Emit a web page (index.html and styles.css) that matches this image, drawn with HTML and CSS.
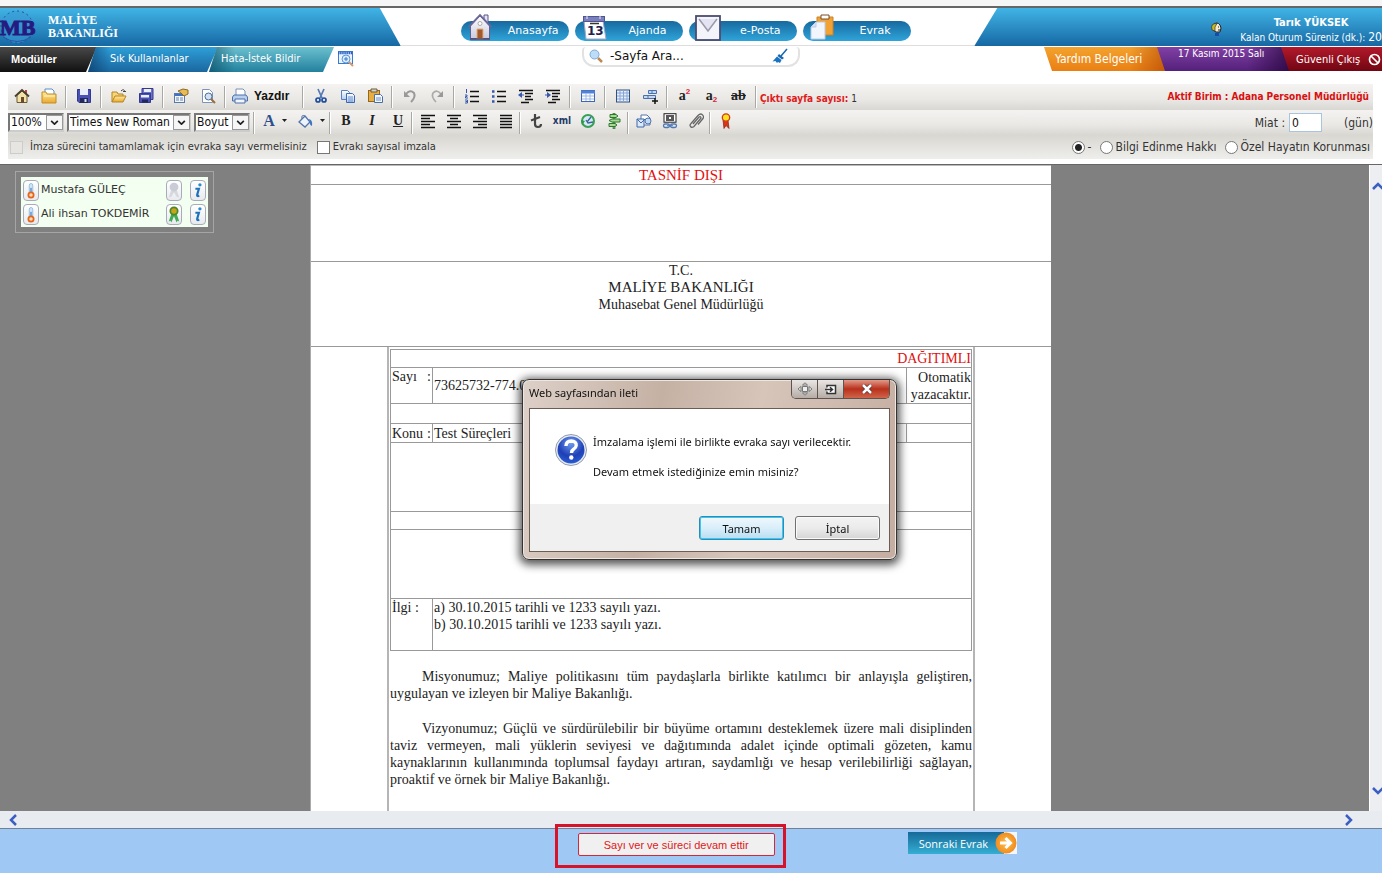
FILE: index.html
```html
<!DOCTYPE html>
<html lang="tr">
<head>
<meta charset="utf-8">
<title>Maliye Bakanlığı - Evrak</title>
<link rel="stylesheet" href="styles.css">
</head>
<body>
<svg class="defs" aria-hidden="true">
  <defs>
    <linearGradient id="roof" x2="0" y2="1"><stop offset="0" stop-color="#fff"/><stop offset="1" stop-color="#c9cbe0"/></linearGradient>
    <linearGradient id="sheetBlue" x2="0" y2="1"><stop offset="0" stop-color="#fff"/><stop offset="1" stop-color="#b4cdf2"/></linearGradient>
    <linearGradient id="folder" x2="0" y2="1"><stop offset="0" stop-color="#ffe9a0"/><stop offset="1" stop-color="#e9a92c"/></linearGradient>
    <radialGradient id="ball" cx=".5" cy=".25" r=".8"><stop offset="0" stop-color="#6f9cf0"/><stop offset=".6" stop-color="#1f3fb5"/><stop offset="1" stop-color="#2b62d8"/></radialGradient>
    <radialGradient id="orange"><stop offset="0" stop-color="#ffbf4d"/><stop offset="1" stop-color="#f08c1e"/></radialGradient>
  </defs>
  <symbol id="thermo" viewBox="0 0 16 20"><rect x="6" y="2" width="4" height="13" rx="2" fill="#cfe4f8" stroke="#93b7d8"/><rect x="7" y="7" width="2" height="7" fill="#6aa3dc"/><circle cx="8" cy="15" r="3" fill="#ffd9bd" stroke="#e2671c" stroke-width="2"/></symbol>
  <symbol id="info" viewBox="0 0 16 20"><circle cx="10.200" cy="3.500" r="1.900" fill="#2c8ad2"/><path d="M5 8h4L7 15q-.3 2 2.500 1" fill="none" stroke="#1d72bd" stroke-width="2.500"/></symbol>
  <symbol id="floppy" viewBox="0 0 16 16"><path d="M1.500 1.500h13v13H3l-1.500-1.500z" fill="#4a50b4" stroke="#33398c"/><rect x="4" y="1" width="8" height="6" fill="#e8eefc"/><rect x="4" y="10" width="8" height="5" fill="#22275e"/><rect x="8.500" y="11" width="2" height="3" fill="#dde3fa"/></symbol>
  <symbol id="caret" viewBox="0 0 5 3"><path d="M0 0h5L2.500 3z" fill="#222"/></symbol>
  <symbol id="chev" viewBox="0 0 10 6"><path d="M1 1l4 4 4-4" fill="none" stroke="#222" stroke-width="2"/></symbol>
</svg>

<div class="browser-edge"></div>
<header class="header">
  <div class="brand">
    <svg class="brand-logo" viewBox="0 0 40 36"><circle cx="17" cy="18" r="16" fill="#3a9bd6" fill-opacity=".6" stroke="#2b4fa0" stroke-dasharray="2 3"/><path d="M3 28q14 9 28 0" fill="none" stroke="#2c55a8"/><text x="0" y="26" class="brand-mono">MB</text></svg>
    <span class="brand-name">MALİYE<br>BAKANLIĞI</span>
  </div>
  <nav class="main-nav">
    <a class="pill" href="#"><svg class="pill-icon" viewBox="0 0 26 28"><path d="M17 2h4v9h-4z" fill="#e4e3f3" stroke="#56568c"/><path d="M3.500 13L13 3l9.500 10v12.500h-19z" fill="url(#roof)" stroke="#66608f"/><path d="M1.500 14L13 2l11.500 12" fill="none" stroke="#6a6798" stroke-width="1.800"/><circle cx="13" cy="10.500" r="2" fill="#fff" stroke="#aaa"/><path d="M10 16h6v10h-6z" fill="#a2592b" stroke="#e0b080"/><path d="M3 26h20" stroke="#564a70" stroke-width="1.500"/></svg><span>Anasayfa</span></a>
    <a class="pill" href="#"><svg class="pill-icon" viewBox="0 0 26 28"><path d="M3 8l2 18h20l-3-18z" fill="#fdfdff" stroke="#a5a5c4"/><rect x="2.500" y="3.500" width="21" height="5" fill="#7a7fbd" stroke="#50558f"/><path d="M6 2v4M19 2v4" stroke="#eef"/><path d="M9 10.500h9" stroke="#333" stroke-width="1.500"/><text x="6" y="22" class="day">13</text></svg><span>Ajanda</span></a>
    <a class="pill" href="#"><svg class="pill-icon" viewBox="0 0 26 28"><rect x="1" y="3" width="24" height="24" fill="#f4f4fb" stroke="#4c4c72" stroke-width="1.800"/><path d="M4 6l9 12 9-12" fill="#e3e3f2" stroke="#9a9aab" stroke-width="1.500"/></svg><span>e-Posta</span></a>
    <a class="pill" href="#"><svg class="pill-icon" viewBox="0 0 26 28"><path d="M8 4h16v18H8z" fill="#f1a233" stroke="#cf8124"/><path d="M12 2h8v4h-8z" fill="#fff" stroke="#754e2c"/><path d="M2 14l5-5h9v17H2z" fill="#f1f6fd" stroke="#b9cbe6"/><path d="M2 14h5V9" fill="#d5e2f4" stroke="#b9cbe6"/></svg><span>Evrak</span></a>
  </nav>
  <div class="account">
    <svg class="account-icon" viewBox="0 0 12 14"><path d="M3 3q4-4 7 0l1 3-1 4H6L3 8z" fill="#f6ecd0" stroke="#222"/><path d="M2 8Q0 1 7 1.500L5 5v4z" fill="#c9b91e" stroke="#333" stroke-width=".7"/><path d="M8 5h1M8 8h2" stroke="#222"/><path d="M5 11h4v3H5z" fill="#1848b0"/></svg>
    <div class="account-text"><strong>Tarık YÜKSEK</strong><span>Kalan Oturum Süreniz (dk.): <b class="minutes">20</b></span></div>
  </div>
</header>

<div class="tabs">
  <nav class="tabs-left">
    <a href="#" class="tab tab-black">Modüller</a>
    <a href="#" class="tab tab-blue">Sık Kullanılanlar</a>
    <a href="#" class="tab tab-teal">Hata-İstek Bildir</a>
    <button class="plain tab-zoom" aria-label="Büyüt"><svg width="17" height="17" viewBox="0 0 17 17"><rect x="1.500" y="1.500" width="14" height="12" fill="#eaf3ff" stroke="#3a7bd0"/><path d="M1 3h15" stroke="#2a63c8" stroke-width="2.500" stroke-dasharray="1.500 .6"/><circle cx="9" cy="9" r="4" fill="#d9ecff" stroke="#5d97d4"/><path d="M7 9h4M9 7v4" stroke="#3978c8"/><path d="M12 12l4 4" stroke="#d39a6b" stroke-width="2"/></svg></button>
  </nav>
  <form class="search">
    <svg width="14" height="14" viewBox="0 0 14 14"><circle cx="5.500" cy="5.500" r="4.500" fill="#bddcf8" stroke="#7fa9d2"/><path d="M9 9l4 4" stroke="#bd8a55" stroke-width="2.500"/></svg>
    <input type="text" aria-label="Sayfa ara" value="-Sayfa Ara...">
    <button type="button" class="plain" aria-label="Temizle"><svg width="17" height="16" viewBox="0 0 17 16"><path d="M16 1l-6 7" stroke="#1767b0" stroke-width="1.500"/><path d="M8 6l5 4-2 1.500L6.500 8z" fill="#1767b0"/><path d="M6 8.500l4.500 3.500-1.500 3-2-1-1 1-1.500-2-3 .5z" fill="#1b72c0"/></svg></button>
  </form>
  <div class="tabs-right">
    <a href="#" class="flag flag-orange">Yardım Belgeleri</a>
    <span class="flag flag-purple">17 Kasım 2015 Salı</span>
    <a href="#" class="flag flag-red">Güvenli Çıkış <svg width="13" height="13" viewBox="0 0 13 13"><circle cx="6.500" cy="6.500" r="5" fill="none" stroke="#fff" stroke-width="1.700"/><path d="M3 3l7 7" stroke="#fff" stroke-width="1.700"/></svg></a>
  </div>
</div>

<div class="toolbars">
  <div class="bar bar-main">
    <button class="tool" aria-label="Ana sayfa"><svg viewBox="0 0 16 16"><path d="M11 2h2v5h-2z" fill="#b44"/><path d="M3 7v7.500h10V7L8 3z" fill="#f4e3a6" stroke="#6b5836"/><path d="M1 8.500L8 2l7 6.500" fill="none" stroke="#4b4030" stroke-width="1.800"/><path d="M7 9h3v6H7z" fill="#6a4a2c"/></svg></button>
    <button class="tool" aria-label="Klasör"><svg viewBox="0 0 16 16"><path d="M4 1h7l2 2v6H4z" fill="#fff" stroke="#5a8fd0"/><path d="M1 4h4l1 2h9v9H1z" fill="url(#folder)" stroke="#c58c1e"/><path d="M3 8h11" stroke="#fff6cc"/></svg></button>
    <i class="sep"></i>
    <button class="tool" aria-label="Kaydet"><svg><use href="#floppy"/></svg></button>
    <i class="sep"></i>
    <button class="tool" aria-label="Aç"><svg viewBox="0 0 16 16"><path d="M1 14V4h5l1 2h5v3" fill="#f5d67a" stroke="#b58420"/><path d="M1 14l3-6h11l-3 6z" fill="url(#folder)" stroke="#b58420"/><path d="M10 3q3-3 4 1m-2-.5h3" fill="none" stroke="#444"/></svg></button>
    <button class="tool" aria-label="Farklı kaydet"><svg viewBox="0 0 16 16"><path d="M4 .5h11v11H4z" fill="#6d74c9" stroke="#33398c"/><path d="M6 1h7v3H6z" fill="#e8eefc"/><path d="M1.500 5.500h11v9h-11z" fill="#4a50b4" stroke="#33398c"/><path d="M3 7h8v2.500H3z" fill="#e8eefc"/><path d="M4 11.500h6v3H4z" fill="#22275e"/></svg></button>
    <i class="sep"></i>
    <button class="tool" aria-label="Özellikler"><svg viewBox="0 0 16 16"><rect x="1.500" y="5.500" width="10" height="9" fill="#f2f6fd" stroke="#5c7aa8"/><path d="M2 7h9" stroke="#3e72c4" stroke-width="2"/><path d="M3 10h3M7 10h3M3 12h3M7 12h3" stroke="#6b85ac"/><path d="M5 3l5-2 5 1v4l-4 2-3-3z" fill="#e7bc55" stroke="#8e6a21"/></svg></button>
    <button class="tool" aria-label="Önizleme"><svg viewBox="0 0 16 16"><path d="M2.500 1.500h7l3 3v10h-10z" fill="#fff" stroke="#7b93b8"/><circle cx="8.500" cy="8.500" r="3.500" fill="#cfe3f7" stroke="#4f6c92"/><path d="M11 11l4 4" stroke="#9b6b3a" stroke-width="2"/></svg></button>
    <i class="sep"></i>
    <button class="tool tool-print"><svg viewBox="0 0 16 16"><path d="M4 7V1h7l2 2v4" fill="#fff" stroke="#7b93b8"/><path d="M2 7h12l1.500 2v4h-15V9z" fill="#b8cff0" stroke="#4e71a8"/><path d="M3 11h10v4H3z" fill="#f1f6ff" stroke="#4e71a8"/></svg>Yazdır</button>
    <i class="sep"></i>
    <button class="tool" aria-label="Kes"><svg viewBox="0 0 16 16"><path d="M5 1l4 9M11 1L7 10" stroke="#5579b5" stroke-width="1.700"/><circle cx="5" cy="12" r="2" fill="none" stroke="#1d4c9e" stroke-width="1.700"/><circle cx="11" cy="12" r="2" fill="none" stroke="#1d4c9e" stroke-width="1.700"/></svg></button>
    <button class="tool" aria-label="Kopyala"><svg viewBox="0 0 16 16"><path d="M1.500 2.500h6l2 2v7h-8z" fill="url(#sheetBlue)" stroke="#5a80bd"/><path d="M6.500 5.500h6l2 2v7h-8z" fill="url(#sheetBlue)" stroke="#3d68b0"/><path d="M8 9h5M8 11h5M8 13h5" stroke="#6b92d0"/></svg></button>
    <button class="tool" aria-label="Yapıştır"><svg viewBox="0 0 16 16"><rect x="1.500" y="2.500" width="11" height="11" fill="#e6ae43" stroke="#96661a"/><path d="M4 1h6v3H4z" fill="#d9d4c8" stroke="#6b5a3c"/><path d="M7.500 6.500h6l2 2v6h-8z" fill="#f3f7ff" stroke="#4f6ea0"/><path d="M9 10h5M9 12h5" stroke="#6b92d0"/></svg></button>
    <i class="sep"></i>
    <button class="tool" aria-label="Geri al"><svg viewBox="0 0 16 16"><path d="M4 6q4-5 8-1 2 4-3 9" fill="none" stroke="#999" stroke-width="2"/><path d="M2 3v6h6z" fill="#999"/></svg></button>
    <button class="tool" aria-label="Yinele"><svg viewBox="0 0 16 16"><path d="M12 6Q8 1 4 5q-2 4 3 9" fill="none" stroke="#aaa" stroke-width="1.700"/><path d="M14 3v6H8z" fill="#999"/></svg></button>
    <i class="sep"></i>
    <button class="tool" aria-label="Numaralı liste"><svg viewBox="0 0 16 16"><path d="M6 3.500h9M6 8.500h9M6 13.500h9" stroke="#111" stroke-width="1.500"/><path d="M2.500 1v4M1 7h2v1.500H1.500V10H4M1 12h2.500v3H1M1.500 13.500h2" fill="none" stroke="#3558ac"/></svg></button>
    <button class="tool" aria-label="Madde işaretli liste"><svg viewBox="0 0 16 16"><path d="M6 3.500h9M6 8.500h9M6 13.500h9" stroke="#111" stroke-width="1.500"/><path d="M1 3.500h2.500M1 8.500h2.500M1 13.500h2.500" stroke="#3558ac" stroke-width="2.500"/></svg></button>
    <button class="tool" aria-label="Girintiyi azalt"><svg viewBox="0 0 16 16"><path d="M1 2.500h14M7 5.500h8M7 8.500h6M7 11.500h8M3 14.500h8" stroke="#111" stroke-width="1.700"/><path d="M0 7l4-3v6z" fill="#3558ac"/><path d="M3 7h3" stroke="#3558ac"/></svg></button>
    <button class="tool" aria-label="Girintiyi artır"><svg viewBox="0 0 16 16"><path d="M1 2.500h14M7 5.500h8M7 8.500h6M7 11.500h8M3 14.500h8" stroke="#111" stroke-width="1.700"/><path d="M6 7L2 4v6z" fill="#3558ac"/><path d="M0 7h3" stroke="#3558ac"/></svg></button>
    <i class="sep"></i>
    <button class="tool" aria-label="Tablo"><svg viewBox="0 0 16 16"><rect x="1.500" y="2.500" width="13" height="11" fill="#fff" stroke="#3e68b4"/><path d="M1 4h14" stroke="#4f82d8" stroke-width="3"/><path d="M2 8h12M2 11h12M6 5v8M10 5v8" stroke="#9db9e6"/></svg></button>
    <i class="sep"></i>
    <button class="tool" aria-label="Tablo ekle"><svg viewBox="0 0 16 16"><rect x="1.500" y="2" width="13" height="12" fill="#e5effd" stroke="#33507f"/><path d="M2 5h12M2 8h12M2 11h12M5 2v12M8.500 2v12M12 2v12" stroke="#88a6d4"/></svg></button>
    <button class="tool" aria-label="Satır ekle"><svg viewBox="0 0 16 16"><path d="M6.500 2.500h8v3h-8zM1.500 7.500h12v3h-12z" fill="#c4d8f6" stroke="#4a70b0"/><path d="M10 3v2M6 8v2" stroke="#4a70b0"/><path d="M10 13h6M13 10v6" stroke="#111" stroke-width="1.500"/></svg></button>
    <i class="sep"></i>
    <button class="tool glyph" aria-label="Üst simge">a<sup>2</sup></button>
    <button class="tool glyph" aria-label="Alt simge">a<sub>2</sub></button>
    <button class="tool glyph strike" aria-label="Üstü çizili">ab</button>
    <i class="sep"></i>
    <span class="page-count"><b>Çıktı sayfa sayısı:</b> 1</span>
    <strong class="unit">Aktif Birim : Adana Personel Müdürlüğü</strong>
  </div>

  <div class="bar bar-format">
    <span class="combo combo-zoom"><select aria-label="Yakınlık"><option>100%</option></select><svg><use href="#chev"/></svg></span>
    <span class="combo combo-font"><select aria-label="Yazı tipi"><option>Times New Roman</option></select><svg><use href="#chev"/></svg></span>
    <span class="combo combo-size"><select aria-label="Boyut"><option>Boyut</option></select><svg><use href="#chev"/></svg></span>
    <i class="sep"></i>
    <button class="tool wide glyph color" aria-label="Yazı rengi">A<svg class="drop"><use href="#caret"/></svg></button>
    <button class="tool wide" aria-label="Dolgu rengi"><svg viewBox="0 0 16 16"><path d="M2 9l6-6 5 6-5 5z" fill="#eef4ff" stroke="#5575a8" stroke-width="1.300"/><path d="M5 6q-1-5 3-3" fill="none" stroke="#5575a8"/><path d="M11 6q5 0 4 7-3-1-2-5z" fill="#3f74c4"/></svg><svg class="drop"><use href="#caret"/></svg></button>
    <i class="sep"></i>
    <button class="tool glyph" aria-label="Kalın">B</button>
    <button class="tool glyph italic" aria-label="İtalik">I</button>
    <button class="tool glyph under" aria-label="Altı çizili">U</button>
    <i class="sep"></i>
    <button class="tool" aria-label="Sola hizala"><svg viewBox="0 0 16 16"><path d="M1 2.500h14M1 5.500h9M1 8.500h14M1 11.500h9M1 14.500h14" stroke="#111" stroke-width="1.300"/></svg></button>
    <button class="tool" aria-label="Ortala"><svg viewBox="0 0 16 16"><path d="M1 2.500h14M4 5.500h8M1 8.500h14M4 11.500h8M1 14.500h14" stroke="#111" stroke-width="1.300"/></svg></button>
    <button class="tool" aria-label="Sağa hizala"><svg viewBox="0 0 16 16"><path d="M1 2.500h14M6 5.500h9M1 8.500h14M6 11.500h9M1 14.500h14" stroke="#111" stroke-width="1.300"/></svg></button>
    <button class="tool" aria-label="İki yana yasla"><svg viewBox="0 0 16 16"><path d="M2 2.500h12M2 5.500h12M2 8.500h12M2 11.500h12M2 14.500h12" stroke="#111" stroke-width="1.300"/></svg></button>
    <i class="sep"></i>
    <button class="tool" aria-label="Türk lirası"><svg viewBox="0 0 16 16"><path d="M7 1v10q0 3 3 3 3 0 3-3" fill="none" stroke="#444" stroke-width="2.200"/><path d="M3 7.500l9-3.500" stroke="#444" stroke-width="2"/></svg></button>
    <button class="tool xml">xml</button>
    <button class="tool" aria-label="Geçmiş"><svg viewBox="0 0 16 16"><circle cx="8" cy="8" r="6" fill="#d6e9f7" stroke="#39a052" stroke-width="2"/><path d="M7 9l4-5M6 7l2 3 5-1" stroke="#39659c" fill="none" stroke-width="1.300"/><path d="M1 7l4 1-3 4z" fill="#2f9a48"/></svg></button>
    <button class="tool" aria-label="Yönlendir"><svg viewBox="0 0 16 16"><path d="M7 0h2v16H7z" fill="#6fae5e" stroke="#2d6b2a" stroke-width=".6"/><path d="M4 1.500h6l2 1.500-2 1.500H4zM14 6H6L3 7.500 6 9h8zM3 10.500h6l2 1.500-2 1.500H3z" fill="#a9d896" stroke="#2d7a2d"/></svg></button>
    <i class="sep"></i>
    <button class="tool" aria-label="Belge gönder"><svg viewBox="0 0 16 16"><path d="M5 2h6l3 3v7H5z" fill="#fff" stroke="#5575a8"/><path d="M1 6h7v8H1z" fill="#dce9fc" stroke="#3f68a8"/><path d="M1 6l4 4 4-4" fill="none" stroke="#3f68a8"/><circle cx="12" cy="8" r="3" fill="#c1d9f8" stroke="#5575a8"/></svg></button>
    <button class="tool" aria-label="Bağlantı"><svg viewBox="0 0 16 16"><rect x="2" y=".7" width="12" height="8.500" fill="#fff" stroke="#222"/><path d="M4 3h8M4 5h3M9 5h3M4 7h8" stroke="#222" stroke-width="1.300"/><rect x="1.500" y="11" width="6" height="3.500" rx="1.700" fill="none" stroke="#4f79b6" stroke-width="1.300"/><rect x="8.500" y="11" width="6" height="3.500" rx="1.700" fill="none" stroke="#4f79b6" stroke-width="1.300"/><path d="M5 12.700h6" stroke="#4f79b6"/></svg></button>
    <button class="tool" aria-label="Ek"><svg viewBox="0 0 16 16"><path d="M5 11l6-7q2-1 2 1l-7 8.500q-3 2-4-1 0-1 1-2l7-8q3-3 5 0 1 1.500 0 3l-5 6" fill="none" stroke="#666" stroke-width="1.300"/></svg></button>
    <i class="sep"></i>
    <button class="tool" aria-label="Sertifika"><svg viewBox="0 0 16 16"><path d="M5 7l1 8.500 2-3 3 3-1-8.500z" fill="#d8361b" stroke="#8b1c0c" stroke-width=".7"/><circle cx="8" cy="4.500" r="3.700" fill="#ffe120" stroke="#d33b16" stroke-width="1.300"/></svg></button>
    <div class="due"><label for="due">Miat :</label><input id="due" type="text" value="0"><span>(gün)</span></div>
  </div>

  <div class="bar bar-options">
    <label class="muted"><input type="checkbox" class="box" disabled>İmza sürecini tamamlamak için evraka sayı vermelisiniz</label>
    <label class="esign"><input type="checkbox" class="box">Evrakı sayısal imzala</label>
    <div class="radios">
      <label><input type="radio" name="kind" class="dot" checked>-</label>
      <label><input type="radio" name="kind" class="dot">Bilgi Edinme Hakkı</label>
      <label><input type="radio" name="kind" class="dot">Özel Hayatın Korunması</label>
    </div>
  </div>
</div>

<main class="workspace">
  <div class="desk">
    <aside class="signers">
      <ul>
        <li><button class="chip" aria-label="Durum"><svg><use href="#thermo"/></svg></button><span>Mustafa GÜLEÇ</span><button class="chip" aria-label="İmza"><svg viewBox="0 0 16 20"><path d="M5 9l-3 9 3-1 3-5 3 5 3 1-3-9z" fill="#d5d8dc"/><circle cx="8" cy="6" r="5" fill="#c9ccd4"/></svg></button><button class="chip" aria-label="Bilgi"><svg><use href="#info"/></svg></button></li>
        <li><button class="chip" aria-label="Durum"><svg><use href="#thermo"/></svg></button><span>Ali ihsan TOKDEMİR</span><button class="chip" aria-label="İmza"><svg viewBox="0 0 16 20"><path d="M5 9l-3 9 2-1 1 2 3-7 3 7 1-2 2 1-3-9z" fill="#43ab57"/><circle cx="8" cy="6" r="4.200" fill="#c8a41c" stroke="#4a8a24" stroke-width="2"/></svg></button><button class="chip" aria-label="Bilgi"><svg><use href="#info"/></svg></button></li>
      </ul>
    </aside>
    <article class="paper">
      <div class="row row-class caps red">TASNİF DIŞI</div>
      <div class="row row-gap"></div>
      <div class="row row-head">T.C.<br><span class="caps">MALİYE BAKANLIĞI</span><br>Muhasebat Genel Müdürlüğü</div>
      <div class="letter">
        <table class="fields">
          <colgroup><col class="c-key"><col><col class="c-side"></colgroup>
          <tr class="h18"><td colspan="3" class="right red">DAĞITIMLI</td></tr>
          <tr class="h36"><td class="top"><span class="key">Sayı <span>:</span></span></td><td>73625732-774.0</td><td class="right">Otomatik yazacaktır.</td></tr>
          <tr class="h20"><td colspan="3"></td></tr>
          <tr class="h19"><td><span class="key">Konu <span>:</span></span></td><td>Test Süreçleri</td><td></td></tr>
          <tr class="h69"><td colspan="3"></td></tr>
          <tr class="h18"><td colspan="3"></td></tr>
          <tr class="h69"><td colspan="3"></td></tr>
          <tr class="h52"><td class="top">İlgi :</td><td colspan="2" class="top">a) 30.10.2015 tarihli ve 1233 sayılı yazı.<br>b) 30.10.2015 tarihli ve 1233 sayılı yazı.</td></tr>
        </table>
        <p>Misyonumuz; Maliye politikasını tüm paydaşlarla birlikte katılımcı bir anlayışla geliştiren, uygulayan ve izleyen bir Maliye Bakanlığı.</p>
        <p>Vizyonumuz; Güçlü ve sürdürülebilir bir büyüme ortamını desteklemek üzere mali disiplinden taviz vermeyen, mali yüklerin seviyesi ve dağıtımında adalet içinde optimali gözeten, kamu kaynaklarının kullanımında toplumsal faydayı artıran, saydamlığı ve hesap verilebilirliği sağlayan, proaktif ve örnek bir Maliye Bakanlığı.</p>
      </div>
    </article>
  </div>
  <div class="vscroll">
    <button class="plain" aria-label="Yukarı"><svg width="12" height="8" viewBox="0 0 12 8"><path d="M1 7l5-5 5 5" fill="none" stroke="#3b5fc0" stroke-width="2.500"/></svg></button>
    <button class="plain" aria-label="Aşağı"><svg width="12" height="8" viewBox="0 0 12 8"><path d="M1 1l5 5 5-5" fill="none" stroke="#3b5fc0" stroke-width="2.500"/></svg></button>
  </div>
</main>
<div class="hscroll">
  <button class="plain" aria-label="Sola"><svg width="8" height="12" viewBox="0 0 8 12"><path d="M7 1L2 6l5 5" fill="none" stroke="#3b5fc0" stroke-width="2.500"/></svg></button>
  <button class="plain" aria-label="Sağa"><svg width="8" height="12" viewBox="0 0 8 12"><path d="M1 1l5 5-5 5" fill="none" stroke="#3b5fc0" stroke-width="2.500"/></svg></button>
</div>
<footer class="footer">
  <div class="marked"><button class="continue">Sayı ver ve süreci devam ettir</button></div>
  <button class="next"><span>Sonraki Evrak</span><svg width="22" height="22" viewBox="0 0 22 22"><circle cx="11" cy="11" r="10.500" fill="url(#orange)"/><path d="M5 11h9M10.500 6l5 5-5 5" fill="none" stroke="#fff" stroke-width="3"/></svg></button>
</footer>

<dialog open class="dialog" aria-labelledby="dlg-title">
  <div class="dialog-bar">
    <h2 id="dlg-title">Web sayfasından ileti</h2>
    <div class="dialog-controls">
      <button aria-label="Taşı"><svg width="16" height="14" viewBox="0 0 16 14"><path d="M5.500 4.500h5v5h-5zM5.500 3L8 .8 10.500 3zM5.500 11L8 13.200 10.500 11zM4 4.500L1 7l3 2.500zM12 4.500L15 7l-3 2.500z" fill="#eee" stroke="#777"/></svg></button>
      <button aria-label="Aktar"><svg width="12" height="11" viewBox="0 0 12 11"><path d="M2 3.500v-2h8.500v8H2v-2" fill="#fff" stroke="#333" stroke-width="1.500"/><path d="M0 5.500h7M5 3.200l2.500 2.300L5 7.800" fill="none" stroke="#333" stroke-width="1.500"/></svg></button>
      <button class="close" aria-label="Kapat"><svg width="12" height="10" viewBox="0 0 12 10"><path d="M2 1l8 8M10 1L2 9" stroke="#5c3030" stroke-width="4"/><path d="M2 1l8 8M10 1L2 9" stroke="#fff" stroke-width="2.500"/></svg></button>
    </div>
  </div>
  <div class="dialog-body">
    <div class="message">
      <svg width="32" height="32" viewBox="0 0 32 32"><circle cx="16" cy="16" r="15.500" fill="#e8ecf3" stroke="#8f9bb0"/><circle cx="16" cy="16" r="13.500" fill="url(#ball)"/><path d="M11 12q0-5 5.200-5 5.300.3 5 4.500-.2 2.400-2.700 3.800-2 1.200-2 3.700" fill="none" stroke="#fff" stroke-width="3.400"/><circle cx="16.300" cy="23.500" r="2.200" fill="#fff"/></svg>
      <div><p>İmzalama işlemi ile birlikte evraka sayı verilecektir.</p><p>Devam etmek istediğinize emin misiniz?</p></div>
    </div>
    <div class="actions"><button class="primary">Tamam</button><button>İptal</button></div>
  </div>
</dialog>
</body>
</html>
```

FILE: styles.css
```css
* { box-sizing: border-box; }
html, body { height: 100%; }
body {
  margin: 0;
  display: flex;
  flex-direction: column;
  min-height: 100vh;
  overflow: hidden;
  background: #fff;
  color: #333;
  font: 12px/16px "DejaVu Sans Condensed", Tahoma, sans-serif;
}
button, input, select { font: inherit; color: inherit; margin: 0; }
a { text-decoration: none; color: #fff; }
svg { flex: none; }
.defs { position: absolute; width: 0; height: 0; }
.plain { border: 0; padding: 0; background: none; display: flex; }

.browser-edge { height: 8px; flex: none; background: #f6f6f6; border-bottom: 2px solid #666; }

/* header */
.header {
  flex: none;
  display: grid;
  grid-template-columns: 29fr 41.500fr 29.500fr;
  height: 38px;
}
.brand, .account { background: linear-gradient(#41b4e6, #1668a3); color: #fff; display: flex; align-items: center; }
.brand { clip-path: polygon(0 0, calc(100% - 21px) 0, 100% 100%, 0 100%); gap: 8px; }
.brand-logo { width: 40px; height: 36px; }
.brand-mono { font: bold 22px "Liberation Serif", serif; fill: #241a80; stroke: #241a80; stroke-width: 1; }
.brand-name { font: bold 12px/13px "Liberation Serif", serif; }
.main-nav { display: flex; justify-content: center; gap: 6px; padding: 5px 4px 0 0; border-bottom: 1px solid #dedede; }
.pill {
  display: flex;
  align-items: center;
  width: 108px;
  height: 20px;
  margin-top: 8px;
  padding-left: 6px;
  border-radius: 10px;
  background: linear-gradient(#17699f, #2fa5da);
  font: 11px/20px "DejaVu Sans", Verdana, sans-serif;
}
.pill span { flex: 1; padding-right: 10px; text-align: right; }
.pill:not(:first-child) span { padding-right: 16px; }
.pill:last-child span { padding-right: 20px; }
.pill-icon { width: 26px; height: 28px; margin-top: -8px; }
.day { font: bold 12px "DejaVu Sans", sans-serif; fill: #20204c; }
.account { clip-path: polygon(23px 0, 100% 0, 100% 100%, 0 100%); justify-content: flex-end; gap: 18px; }
.account-icon { width: 12px; height: 14px; margin-top: 4px; }
.account-text { display: flex; flex-direction: column; align-items: center; padding-top: 6px; font-size: 10px; line-height: 15px; white-space: nowrap; }
.account-text strong { font-size: 11px; }
.minutes { font-weight: normal; font-size: 12px; }

/* tabs under the header */
.tabs { flex: none; display: grid; grid-template-columns: 1fr 218px 1fr; height: 38px; padding-top: 1px; align-items: start; }
.tabs-left, .tabs-right { display: flex; align-items: flex-start; white-space: nowrap; }
.tabs-right { justify-content: flex-end; }
.tab { height: 25px; font-size: 11px; line-height: 23px; clip-path: polygon(8px 0, 100% 0, calc(100% - 11px) 100%, 0 100%); margin-left: -9px; padding-left: 20px; }
.tab-black { width: 106px; background: linear-gradient(#484848, #111); font: bold 11px/25px "Liberation Sans", Arial, sans-serif; }
.tab-blue { width: 130px; padding-left: 22px; background: linear-gradient(90deg, rgba(8, 50, 95, .6), transparent 22px), linear-gradient(#2e9fd8, #1a679f); }
.tab-teal { width: 125px; background: linear-gradient(90deg, rgba(8, 70, 95, .6), transparent 26px), linear-gradient(#6cc0cf, #22819e); padding-left: 12px; }
.tab-zoom { margin: 3px 0 0 3px; }
.search {
  display: flex;
  align-items: center;
  gap: 7px;
  height: 20px;
  padding: 0 10px 0 5px;
  border: solid #e2e2e2;
  border-width: 0 2px 2px;
  border-radius: 4px 4px 12px 12px;
}
.search input {
  flex: 1;
  min-width: 0;
  border: 0;
  padding: 0;
  background: none;
  color: #111;
  outline: 0;
  font: 12px/16px "DejaVu Sans", Verdana, sans-serif;
}
.flag { height: 24px; margin-left: -10px; line-height: 25px; clip-path: polygon(0 0, 100% 0, 100% 100%, 8px 100%); color: #fff; }
.flag-orange { width: 123px; padding-left: 11px; background: linear-gradient(90deg, transparent 86px, rgba(170, 60, 0, .6)), linear-gradient(#f3a32f, #ea7f12); }
.flag-purple { width: 134px; padding-left: 21px; font-size: 10px; line-height: 13px; background: linear-gradient(90deg, transparent 90px, rgba(30, 0, 50, .7)), linear-gradient(#8141a5, #54207a); }
.flag-red { width: 101px; padding-left: 15px; font-size: 11px; display: flex; gap: 8px; align-items: center; background: linear-gradient(#b3192b, #710612); }

/* toolbars */
.toolbars { flex: none; padding: 0 9px 5px 8px; border-bottom: 1px solid #666; }
.bar { display: flex; align-items: center; white-space: nowrap; background: linear-gradient(#f4f3f1, #e9e8e5 60%, #d9d7d2); }
.bar-main { height: 26px; }
.bar-format { height: 25px; }
.bar-options { height: 24px; background: linear-gradient(#d9d7d1, #eeeeec); }
.tool { display: flex; align-items: center; justify-content: center; flex: none; width: 27px; height: 24px; padding: 0 0 2px; border: 0; background: none; }
.tool svg { width: 16px; height: 16px; }
.tool .drop { width: 5px; height: 3px; }
.bar-format .tool { width: 26px; padding-bottom: 4px; }
.bar-format .wide { width: 36px; gap: 7px; }
.sep { flex: none; width: 8px; height: 22px; background: linear-gradient(90deg, transparent 3px, #a8a8a4 3px 4px, #fff 4px 5px, transparent 5px); }
.bar-format .sep { width: 4px; background: linear-gradient(90deg, #a8a8a4 1px, #fff 1px 2px, transparent 2px); }
.bar-format .combo-size + .sep { margin-left: 3px; }
.bar-main .tool-print { width: 70px; gap: 6px; justify-content: flex-start; padding-left: 3px; font: bold 12px "Liberation Sans", Arial, sans-serif; color: #111; }
.glyph { font: bold 14px/16px "Liberation Serif", serif; color: #222; }
.glyph sup, .glyph sub { font: bold 8px/8px "Liberation Sans", sans-serif; color: #d81e3c; }
.glyph sup { align-self: flex-start; padding-top: 3px; }
.glyph sub { align-self: flex-end; padding-bottom: 3px; }
.strike { text-decoration: line-through; }
.italic { font-style: italic; }
.under { text-decoration: underline; }
.color { color: #2d4f8c; font-size: 16px; }
.xml { font: bold 10px "DejaVu Sans Condensed", sans-serif; color: #1e3a66; }
.page-count { font-size: 10px; padding-top: 4px; }
.page-count b { color: #e01b1b; }
.unit { margin-left: auto; padding-right: 4px; color: #d81111; font-size: 10px; }

.combo { position: relative; display: flex; height: 19px; margin-right: 3px; }
.combo select { appearance: none; width: 100%; height: 19px; padding: 0 0 0 1px; border: 2px solid #777; border-right-color: #ccc; border-bottom-color: #ccc; border-radius: 0; background: #fff; color: #111; font-size: 12px; line-height: 15px; }
.combo svg { position: absolute; right: 1px; top: 2px; width: 17px; height: 15px; padding: 4px 3px; border: 1px solid #999; background: #f6f6f6; pointer-events: none; }
.combo-zoom { width: 56px; }
.combo-font { width: 124px; }
.combo-size { width: 56px; margin-right: 0; }

.due { display: flex; align-items: center; gap: 4px; margin-left: auto; }
.due input { width: 33px; height: 19px; padding: 0 2px; border: 1px solid #a9c4e0; background: #fff; color: #111; }
.due span { padding-left: 18px; }
.bar-options label { display: flex; align-items: center; gap: 3px; }
.bar-options .muted { gap: 7px; padding-left: 2px; font-size: 11px; }
.bar-options .esign { padding-left: 10px; font-size: 11px; }
.box, .dot { appearance: none; flex: none; width: 13px; height: 13px; border: 1px solid #777; background: #fff; }
.box:disabled { border-color: #ccc; background: #e6e5e2; }
.dot { border-radius: 50%; }
.dot:checked { background: radial-gradient(#222 3px, #fff 4px); }
.radios { display: flex; gap: 8px; margin-left: auto; padding-right: 3px; }

/* workspace */
.workspace { flex: 1; min-height: 0; display: flex; overflow: hidden; }
.desk { flex: 1; display: grid; grid-template-columns: minmax(220px, 1fr) 741px minmax(0, 1fr); padding-right: 8px; background: #808080; overflow: hidden; }
.signers { justify-self: start; align-self: start; width: 199px; margin: 6px 0 0 15px; padding: 5px; border: 1px solid #a5a5a5; }
.signers ul { margin: 0; padding: 1px 2px; list-style: none; background: #f3fff0; }
.signers li { display: grid; grid-template-columns: 16px 123px 22px 16px; column-gap: 2px; align-items: center; height: 24px; font-size: 11px; font-family: "DejaVu Sans", sans-serif; white-space: nowrap; }
.chip { width: 16px; height: 21px; padding: 0; border: 1px solid #aab; border-radius: 4px; background: linear-gradient(#fff, #e8eaee); display: flex; }
.chip svg { width: 14px; height: 19px; }

.paper { background: #fff; border-left: 1px solid #aaa; color: #222; font: 14px/17px "Liberation Serif", "Times New Roman", serif; }
.caps { font-size: 15px; }
.red { color: #e01010; }
.row { border-bottom: 1px solid #999; text-align: center; }
.row-class { height: 20px; padding-top: 1px; border-top: 1px solid #bbb; }
.row-gap { height: 77px; }
.row-head { height: 85px; }
.letter { width: 588px; min-height: 480px; margin: 0 auto; padding: 2px 1px 20px; border: solid #b5b5b5; border-width: 0 2px; }
.fields { width: 100%; border-collapse: collapse; table-layout: fixed; }
.c-key { width: 42px; }
.c-side { width: 65px; }
.fields td { padding: 0 1px; border: 1px solid #999; vertical-align: middle; }
.fields .top { vertical-align: top; }
.fields .right { text-align: right; padding: 0; }
.key { display: flex; justify-content: space-between; }
.h18 { height: 18px; }
.h19 { height: 19px; }
.h20 { height: 20px; }
.h36 { height: 36px; }
.h52 { height: 52px; }
.h69 { height: 69px; }
.letter p { margin: 17px 0 18px; text-align: justify; text-indent: 32px; }

.vscroll { flex: none; width: 13px; display: flex; flex-direction: column; justify-content: space-between; padding: 17px 0 16px 2px; border-left: 1px solid #fff; background: #eceef2; overflow: hidden; }
.hscroll { flex: none; height: 18px; display: flex; justify-content: space-between; align-items: center; padding: 0 29px 0 9px; border-bottom: 1px solid #6f8194; background: #e8ebf0; }

/* footer */
.footer { flex: none; display: flex; align-items: flex-start; height: 44px; padding: 3px 0 0 41.800%; background: #a0c8f5; }
.marked { position: relative; margin-right: 133px; }
.marked::before { content: ""; position: absolute; inset: -8px -11px -12px -23px; border: 3px solid #d5142c; pointer-events: none; }
.continue { position: relative; display: block; width: 197px; height: 23px; margin-top: 1px; border: 1px solid #d3273a; border-radius: 2px; background: #f0f0f0; color: #e01818; font: 11px "Liberation Sans", Arial, sans-serif; }
.next { display: flex; align-items: center; justify-content: space-between; width: 109px; height: 22px; padding: 0 0 0 11px; border: 0; background: linear-gradient(90deg, transparent 96px, #f3f6fa 96px), linear-gradient(#166998, #35aed3); color: #fff; font: 11px "Open Sans", sans-serif; white-space: nowrap; }

/* message box */
.dialog { position: fixed; left: calc(50% - 169px); top: 379px; margin: 0; width: 375px; padding: 0 6px 7px; border: 1px solid #333; border-radius: 7px; background: linear-gradient(100deg, #ddd0c8, #c5b1a4 35%, #d7c5ba 60%, #c4ada1); box-shadow: 0 2px 9px 3px rgba(0, 0, 0, .65), inset 0 0 0 1px #efe6df; color: #111; font: 12px/15px "Noto Sans", "Segoe UI", sans-serif; }
.dialog-bar { display: flex; justify-content: space-between; height: 28px; }
.dialog-bar h2 { margin: 0; padding-top: 5px; font-size: 11px; line-height: 16px; font-weight: normal; }
.dialog-controls { display: flex; height: 19px; border: 1px solid #5d5450; border-top: 0; border-radius: 0 0 5px 5px; overflow: hidden; }
.dialog-controls button { display: flex; align-items: center; justify-content: center; width: 26px; padding: 0; border: 0; border-right: 1px solid #5d5450; background: linear-gradient(#eae6e3, #b5aca6); }
.dialog-controls .close { width: 45px; border-right: 0; background: linear-gradient(#e39a8a, #b8301b 50%, #d0644a); }
.dialog-body { border: 1px solid #6b5d55; background: #f0f0f0; }
.message { display: flex; gap: 6px; height: 95px; padding: 25px 0 0 25px; background: #fff; font-size: 11px; white-space: nowrap; }
.message p { margin: 0 0 15px; }
.actions { display: flex; justify-content: flex-end; gap: 11px; padding: 12px 9px 11px; }
.actions button { width: 85px; height: 24px; border: 1px solid #707070; border-radius: 3px; background: linear-gradient(#f3f3f3, #ebebeb 50%, #d5d5d5); box-shadow: inset 0 0 0 1px #fafafa; font-size: 11px; }
.actions .primary { border-color: #2c8cb8; box-shadow: inset 0 0 0 1px #3fc6ef; background: linear-gradient(#f0f8fc, #d9eefa 50%, #b8ddf2); }
```
